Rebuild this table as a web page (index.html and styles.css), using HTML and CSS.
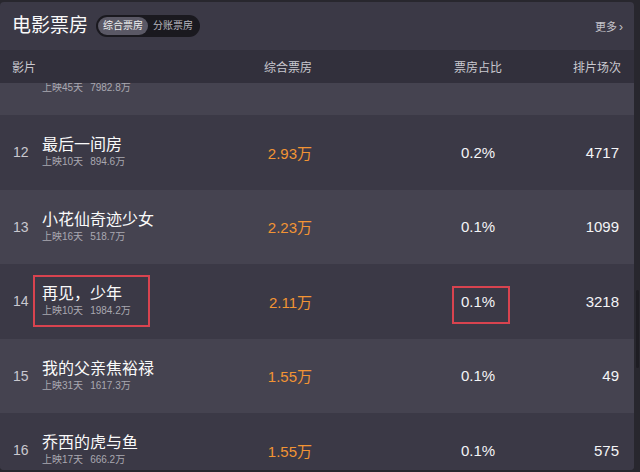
FILE: index.html
```html
<!DOCTYPE html>
<html lang="zh-CN">
<head>
    <meta charset="UTF-8">
    <meta name="viewport" content="width=device-width, initial-scale=1.0">
    <title>电影票房</title>
    <link rel="stylesheet" href="styles.css">
</head>
<body>
    <div class="panel">
        <!-- 标题栏 -->
        <div class="top">
            <h1>电影票房</h1>
            <div class="switch">
                <span class="tab on">综合票房</span>
                <span class="tab">分账票房</span>
            </div>
            <a class="more">更多<span class="arr">›</span></a>
        </div>

        <div class="row head">
            <div class="c-name">影片</div>
            <div class="c-box">综合票房</div>
            <div class="c-gap"></div>
            <div class="c-rate">票房占比</div>
            <div class="c-show">排片场次</div>
        </div>

        <div class="list">
            <div class="rows">
                <!-- 第11行被表头遮住，只露出副标题 -->
                <div class="row item odd">
                    <div class="c-num"></div>
                    <div class="c-film"><div class="t"></div><div class="s">上映45天<span class="sum">7982.8万</span></div></div>
                    <div class="c-box val"></div>
                    <div class="c-gap"></div>
                    <div class="c-rate"></div>
                    <div class="c-show"></div>
                </div>
                <div class="row item">
                    <div class="c-num">12</div>
                    <div class="c-film"><div class="t">最后一间房</div><div class="s">上映10天<span class="sum">894.6万</span></div></div>
                    <div class="c-box val">2.93万</div>
                    <div class="c-gap"></div>
                    <div class="c-rate">0.2%</div>
                    <div class="c-show">4717</div>
                </div>
                <div class="row item odd">
                    <div class="c-num">13</div>
                    <div class="c-film"><div class="t">小花仙奇迹少女</div><div class="s">上映16天<span class="sum">518.7万</span></div></div>
                    <div class="c-box val">2.23万</div>
                    <div class="c-gap"></div>
                    <div class="c-rate">0.1%</div>
                    <div class="c-show">1099</div>
                </div>
                <div class="row item">
                    <div class="c-num">14</div>
                    <div class="c-film"><span class="mark mark-film"></span><div class="t">再见，少年</div><div class="s">上映10天<span class="sum">1984.2万</span></div></div>
                    <div class="c-box val">2.11万</div>
                    <div class="c-gap"></div>
                    <div class="c-rate"><span class="mark mark-rate"></span>0.1%</div>
                    <div class="c-show">3218</div>
                </div>
                <div class="row item odd">
                    <div class="c-num">15</div>
                    <div class="c-film"><div class="t">我的父亲焦裕禄</div><div class="s">上映31天<span class="sum">1617.3万</span></div></div>
                    <div class="c-box val">1.55万</div>
                    <div class="c-gap"></div>
                    <div class="c-rate">0.1%</div>
                    <div class="c-show">49</div>
                </div>
                <div class="row item">
                    <div class="c-num">16</div>
                    <div class="c-film"><div class="t">乔西的虎与鱼</div><div class="s">上映17天<span class="sum">666.2万</span></div></div>
                    <div class="c-box val">1.55万</div>
                    <div class="c-gap"></div>
                    <div class="c-rate">0.1%</div>
                    <div class="c-show">575</div>
                </div>
            </div>
        </div>
    </div>
    <div class="track"><div class="thumb"></div></div>
</body>
</html>
```

FILE: styles.css
```css
html, body { margin: 0; padding: 0; }
body {
    width: 640px;
    height: 472px;
    overflow: hidden;
    display: flex;
    background: #28272e;
    font-family: "Liberation Sans", "Noto Sans CJK SC", sans-serif;
    color: #f2f2f4;
}

.panel {
    width: 634px;
    height: 468px;
    margin-top: 2px;
    border-radius: 4px;
    background: #3b3946;
    overflow: hidden;
    display: flex;
    flex-direction: column;
}

/* 标题栏 */
.top { height: 48px; display: flex; align-items: center; padding: 0 11px 0 12px; flex-shrink: 0; }
.top h1 { margin: 0; font-size: 19px; font-weight: normal; color: #fafafa; line-height: 24px; }
.switch { display: flex; margin-left: 8px; padding: 2px; height: 18px; border-radius: 11px; background: #1a191f; }
.tab { font-size: 10px; line-height: 18px; padding: 0 5px; color: #b9b8bf; border-radius: 9px; white-space: nowrap; }
.tab.on { background: #5a5865; color: #f0f0f2; }
.more { margin-left: auto; font-size: 11px; color: #c4c3ca; }
.arr { margin-left: 2px; font-size: 12px; }

/* 表格 */
.row {
    display: grid;
    grid-template-columns: 30px 160px 110px 118px 96px 95px;
    align-items: center;
    padding: 0 13px 0 12px;
}
.head { height: 33px; background: #32303c; font-size: 12px; color: #c9c8cf; flex-shrink: 0; }
.head .c-name { grid-column: span 2; }
.c-box { text-align: right; }
.c-rate { text-align: center; position: relative; }
.c-show { text-align: right; }

.list { flex: 1; overflow: hidden; }
.rows { margin-top: -42.5px; }
.item { height: 74.5px; background: #3b3946; }
.item.odd { background: #454350; }
.c-num { font-size: 14px; color: #c9c8cf; padding-left: 1px; }
.c-film { position: relative; }
.t { font-size: 16px; line-height: 19px; height: 19px; color: #fafafa; }
.s { font-size: 10px; line-height: 15px; color: #a9a8b0; }
.sum { margin-left: 7px; }
.val { font-size: 15px; color: #f29434; }
.item .c-rate, .item .c-show { font-size: 15px; color: #f4f4f6; }
.item .c-show { padding-right: 2px; }

/* 红框标注 */
.mark { position: absolute; border: 2px solid #d8434f; box-sizing: border-box; }
.mark-film { left: -9px; top: -9px; width: 117px; height: 52px; }
.mark-rate { left: 22px; top: -7px; width: 58px; height: 38px; }

/* 滚动条 */
.track { width: 6px; height: 468px; margin-top: 2px; }
.thumb { width: 3px; height: 78px; margin: 288px 0 0 2px; background: #1e1d23; border-radius: 2px; }
```
